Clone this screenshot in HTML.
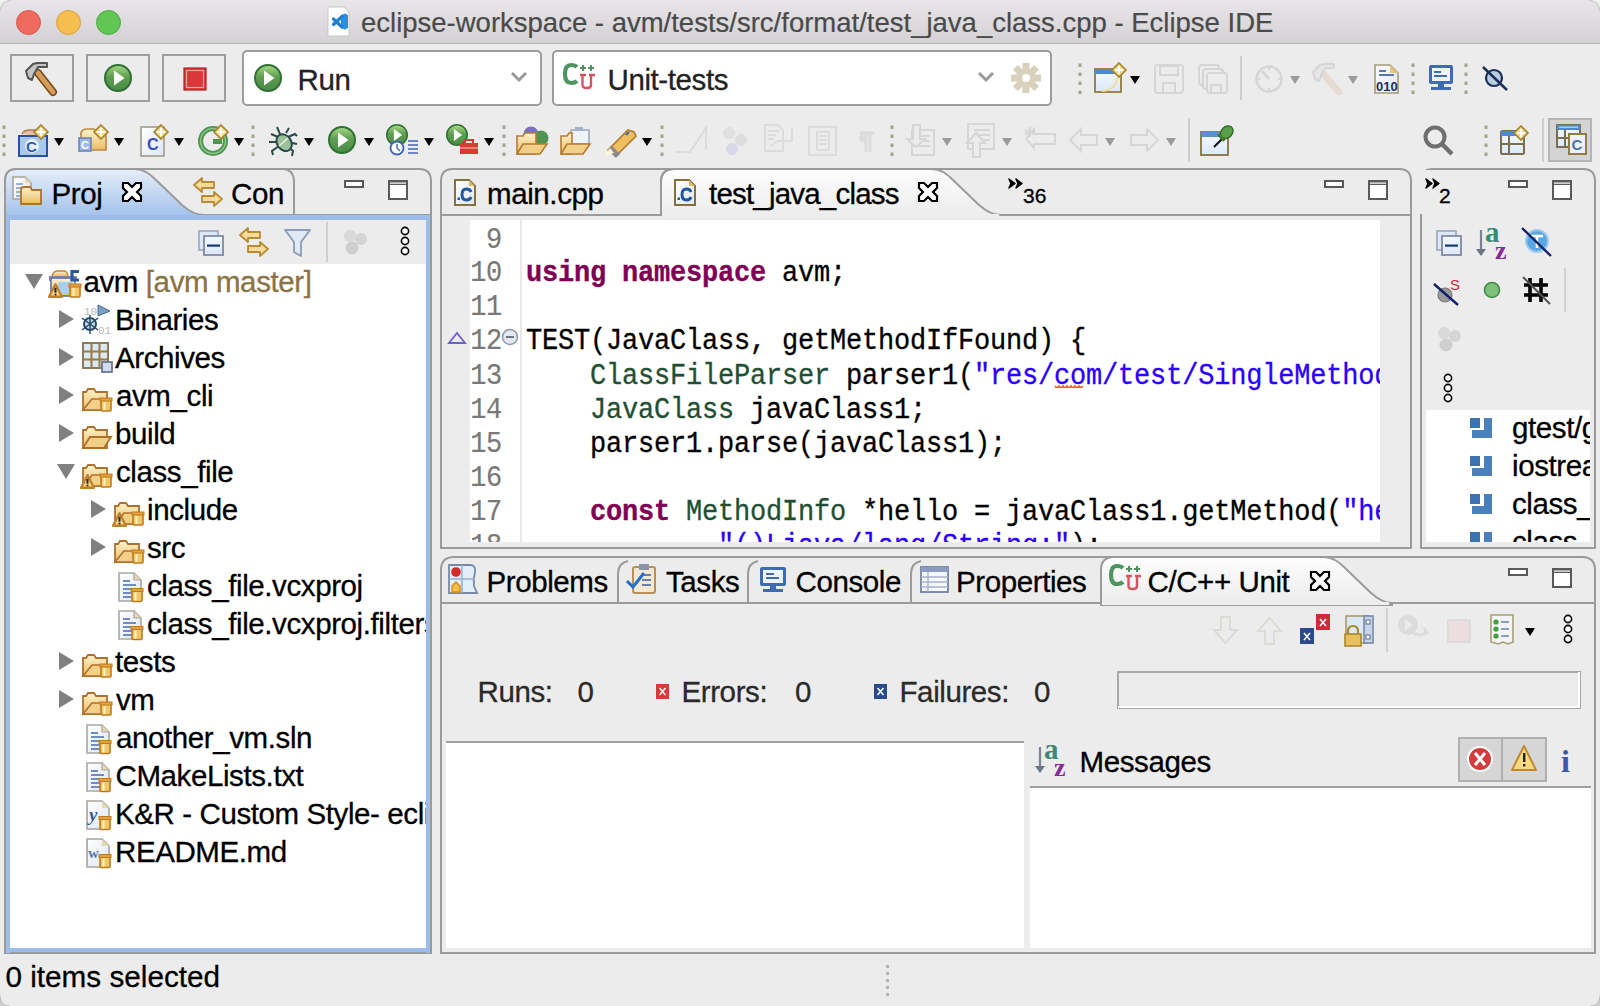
<!DOCTYPE html>
<html><head><meta charset="utf-8">
<style>
*{box-sizing:border-box;margin:0;padding:0}
html,body{width:1600px;height:1006px;overflow:hidden;background:#ececec;font-family:"Liberation Sans",sans-serif;color:#000}
.a{position:absolute}
svg{position:absolute;overflow:visible}
.t{position:absolute;font-size:29.5px;letter-spacing:-0.4px;white-space:nowrap;line-height:1;-webkit-text-stroke:0.3px}
.code{position:absolute;left:526px;font-family:"Liberation Mono",monospace;font-size:27px;letter-spacing:-0.2px;white-space:pre;line-height:32.075px;color:#000;-webkit-text-stroke:0.3px}
.kw{color:#7f0055;font-weight:bold}
.ty{color:#1f5035}
.st{color:#2a00ff}
.ln{position:absolute;left:441px;width:61px;font-family:"Liberation Mono",monospace;font-size:27px;letter-spacing:-0.3px;color:#787878;text-align:right;line-height:32.075px;white-space:pre;-webkit-text-stroke:0.2px}
.light{position:absolute;top:10px;width:25px;height:25px;border-radius:50%}
.tbtn{position:absolute;top:54px;width:64px;height:48px;border:2px solid #9e9e9e}
.combo{position:absolute;top:50px;height:56px;background:#fff;border:2px solid #9c9c9c;border-radius:5px}
.g{background:#9b9b9b;position:absolute}
.w{background:#fff;position:absolute}
.bl{background:#9cbdeb;position:absolute}
</style></head><body>
<!-- title bar -->
<div class="a" style="left:0;top:0;width:1600px;height:44px;background:linear-gradient(#e8e6e8,#d3d1d3);border-bottom:1px solid #b9b7b9;border-radius:11px 11px 0 0"></div>
<div class="light" style="left:16px;background:#ee6a5f;border:1px solid #d9564c"></div>
<div class="light" style="left:56px;background:#f6be4f;border:1px solid #dca03f"></div>
<div class="light" style="left:96px;background:#62c655;border:1px solid #50aa43"></div>
<div class="t" style="left:361px;top:8.5px;font-size:27.5px;letter-spacing:0;color:#4a4a4a;-webkit-text-stroke:0.2px">eclipse-workspace - avm/tests/src/format/test_java_class.cpp - Eclipse IDE</div>

<!-- toolbar row 1 -->
<div class="tbtn" style="left:10px"></div>
<div class="tbtn" style="left:86px"></div>
<div class="tbtn" style="left:162px"></div>
<div class="combo" style="left:242px;width:300px"></div>
<div class="t" style="left:297.5px;top:65px;color:#222">Run</div>
<div class="combo" style="left:552px;width:500px"></div>
<div class="t" style="left:607.5px;top:65px;color:#222">Unit-tests</div>

<!-- ============ LEFT PANEL ============ -->
<svg width="1600" height="1006" style="left:0;top:0">
  <defs>
    <linearGradient id="gBlue" x1="0" y1="0" x2="0" y2="1">
      <stop offset="0" stop-color="#e6eefa"/><stop offset="1" stop-color="#a3c2ec"/>
    </linearGradient>
    <linearGradient id="gWhite" x1="0" y1="0" x2="0" y2="1">
      <stop offset="0" stop-color="#fdfdfd"/><stop offset="1" stop-color="#ececec"/>
    </linearGradient>
  </defs>
  <!-- left panel outer -->
  <path d="M5,953 L5,181 Q5,169 17,169 L419,169 Q431,169 431,181 L431,953 Z" fill="#ececec" stroke="#9b9b9b" stroke-width="2"/>
  <!-- active Proj tab -->
  <path d="M5,216 L5,181 Q5,169 17,169 L134,169 C144,169 150,174 156,180 L182,205 C190,212 196,215 204,215 L204,216 Z" fill="url(#gBlue)" stroke="#9b9b9b" stroke-width="2"/>
  <!-- Con tab right edge -->
  <path d="M294,215 L294,182 Q294,169 282,169" fill="none" stroke="#9b9b9b" stroke-width="2"/>
  <line x1="204" y1="215" x2="431" y2="215" stroke="#9b9b9b" stroke-width="2"/>
  <rect x="6" y="215" width="424" height="5" fill="#9cbdeb"/>
  <rect x="6" y="215" width="4" height="738" fill="#9cbdeb"/>
  <rect x="426" y="215" width="4" height="738" fill="#9cbdeb"/>
  <rect x="6" y="948" width="424" height="4" fill="#9cbdeb"/>
  <rect x="10" y="264" width="416" height="684" fill="#fff"/>

  <!-- editor panel -->
  <path d="M441,548 L441,181 Q441,169 453,169 L1399,169 Q1411,169 1411,181 L1411,548 Z" fill="#ececec" stroke="#9b9b9b" stroke-width="2"/>
  <line x1="441" y1="215" x2="1411" y2="215" stroke="#9b9b9b" stroke-width="2"/>
  <path d="M661,217 L661,182 Q661,169 674,169 L931,169 C941,169 947,174 953,180 L979,205 C987,212 993,215 1001,215 L1001,217 Z" fill="url(#gWhite)" stroke="#9b9b9b" stroke-width="2"/>
  <path d="M661,215 L661,182 Q661,169 674,169" fill="none" stroke="#9b9b9b" stroke-width="2"/>
  <rect x="442" y="216" width="968" height="4" fill="#ececec"/>
  <rect x="662" y="214" width="337" height="3" fill="#eeeeee"/>
  <rect x="470" y="220" width="910" height="322" fill="#fff"/>
  <rect x="520" y="220" width="2" height="322" fill="#e8e8e8"/>

  <!-- outline panel -->
  <path d="M1421,548 L1421,181 Q1421,169 1433,169 L1583,169 Q1595,169 1595,181 L1595,548 Z" fill="#ececec" stroke="#9b9b9b" stroke-width="2"/>
  <rect x="1420" y="170" width="10" height="44" fill="#ececec"/>
  <rect x="1426" y="410" width="164" height="132" fill="#fff"/>

  <!-- bottom panel -->
  <path d="M441,953 L441,570 Q441,557 454,557 L1582,557 Q1595,557 1595,570 L1595,953 Z" fill="#ececec" stroke="#9b9b9b" stroke-width="2"/>
  <line x1="441" y1="603" x2="1595" y2="603" stroke="#9b9b9b" stroke-width="2"/>
  <path d="M618,603 L618,574 Q618,563 628,561" fill="none" stroke="#9b9b9b" stroke-width="2"/>
  <path d="M748,603 L748,574 Q748,563 758,561" fill="none" stroke="#9b9b9b" stroke-width="2"/>
  <path d="M911,603 L911,574 Q911,563 921,561" fill="none" stroke="#9b9b9b" stroke-width="2"/>
  <path d="M1101,605 L1101,570 Q1101,557 1114,557 L1323,557 C1333,557 1339,562 1345,568 L1371,593 C1379,600 1385,603 1392,603 L1392,605 Z" fill="url(#gWhite)" stroke="#9b9b9b" stroke-width="2"/>
  <rect x="1102" y="602" width="287" height="3" fill="#eeeeee"/>
  <!-- progress bar -->
  <rect x="1118" y="672" width="462" height="36" fill="#ececec" stroke="#a8a8a8" stroke-width="2"/>
  <line x1="1118" y1="707" x2="1580" y2="707" stroke="#fff" stroke-width="2"/>
  <line x1="1579" y1="672" x2="1579" y2="708" stroke="#fff" stroke-width="2"/>
  <!-- left tree area -->
  <rect x="446" y="742" width="578" height="206" fill="#fff"/>
  <line x1="446" y1="742" x2="1024" y2="742" stroke="#a0a0a0" stroke-width="2"/>
  <!-- messages area -->
  <rect x="1030" y="787" width="561" height="161" fill="#fff"/>
  <line x1="1030" y1="787" x2="1591" y2="787" stroke="#a0a0a0" stroke-width="2"/>
  <rect x="1459" y="738" width="87" height="43" fill="#d6d6d6" stroke="#b0b0b0" stroke-width="2"/>
  <line x1="1502" y1="738" x2="1502" y2="781" stroke="#b0b0b0" stroke-width="2"/>
</svg>

<!-- left panel text -->
<div class="t" style="left:51.5px;top:179px">Proj</div>
<div class="t" style="left:231px;top:179px">Con</div>
<div class="a" style="left:10px;top:264px;width:416px;height:684px;overflow:hidden">
<div class="t" style="left:73.5px;top:3px">avm <span style="color:#8b7443">[avm master]</span></div>
<div class="t" style="left:105.0px;top:41px">Binaries</div>
<div class="t" style="left:105.0px;top:79px">Archives</div>
<div class="t" style="left:106.0px;top:117px">avm_cli</div>
<div class="t" style="left:105.0px;top:155px">build</div>
<div class="t" style="left:106.0px;top:193px">class_file</div>
<div class="t" style="left:137.0px;top:231px">include</div>
<div class="t" style="left:137.0px;top:269px">src</div>
<div class="t" style="left:137.0px;top:307px">class_file.vcxproj</div>
<div class="t" style="left:137.0px;top:345px">class_file.vcxproj.filters</div>
<div class="t" style="left:105.0px;top:383px">tests</div>
<div class="t" style="left:106.0px;top:421px">vm</div>
<div class="t" style="left:106.0px;top:459px">another_vm.sln</div>
<div class="t" style="left:105.5px;top:497px">CMakeLists.txt</div>
<div class="t" style="left:105.0px;top:535px">K&amp;R - Custom Style- eclipse</div>
<div class="t" style="left:105.0px;top:573px">README.md</div>
</div>
<!-- editor tabs -->
<div class="t" style="left:487px;top:178.5px">main.cpp</div>
<div class="t" style="left:709px;top:178.5px;letter-spacing:-0.8px">test_java_class</div>
<div class="t" style="left:1023px;top:185px;font-size:21px;letter-spacing:0">36</div>
<!-- editor code -->
<div class="a" style="left:441px;top:220px;width:939px;height:322px;overflow:hidden"><div class="a" style="left:0;top:0;width:939px;height:400px;transform:scaleY(1.06);transform-origin:0 0">
<div class="ln" style="left:0;top:3.2px">9
10
11
12
13
14
15
16
17
18</div>
<div class="code" style="left:85px;top:3.2px">
<span class="kw">using</span> <span class="kw">namespace</span> avm;

TEST(JavaClass, getMethodIfFound) {
    <span class="ty">ClassFileParser</span> parser1(<span class="st">"res/com/test/SingleMethodClass.class"</span>);
    <span class="ty">JavaClass</span> javaClass1;
    parser1.parse(javaClass1);

    <span class="kw">const</span> <span class="ty">MethodInfo</span> *hello = javaClass1.getMethod(<span class="st">"hello"</span>,
            <span class="st">"()Ljava/lang/String;"</span>);</div>
</div></div>

<!-- outline list -->
<div class="a" style="left:1426px;top:410px;width:164px;height:132px;overflow:hidden">
<div class="t" style="left:86px;top:3px">gtest/gtest.h</div>
<div class="t" style="left:86px;top:41px">iostream</div>
<div class="t" style="left:86px;top:79px">class_file.h</div>
<div class="t" style="left:86px;top:117px">class_file.h</div>
</div>
<div class="t" style="left:1439px;top:185px;font-size:21px;letter-spacing:0">2</div>

<!-- bottom tabs -->
<div class="t" style="left:486.5px;top:566.5px">Problems</div>
<div class="t" style="left:666px;top:566.5px">Tasks</div>
<div class="t" style="left:795.5px;top:566.5px">Console</div>
<div class="t" style="left:956px;top:566.5px">Properties</div>
<div class="t" style="left:1147.5px;top:566.5px">C/C++ Unit</div>

<div class="t" style="left:477.5px;top:677px;color:#2a2a2a">Runs:</div>
<div class="t" style="left:577.5px;top:677px;color:#2a2a2a">0</div>
<div class="t" style="left:681.5px;top:677px;color:#2a2a2a">Errors:</div>
<div class="t" style="left:795px;top:677px;color:#2a2a2a">0</div>
<div class="t" style="left:899.5px;top:677px;color:#2a2a2a">Failures:</div>
<div class="t" style="left:1034px;top:677px;color:#2a2a2a">0</div>
<div class="t" style="left:1079.5px;top:747px">Messages</div>

<!-- status -->
<div class="t" style="left:5.5px;top:961.5px;font-size:29.7px;letter-spacing:0">0 items selected</div>

<!-- ============ ICONS ============ -->
<svg width="1600" height="1006" style="left:0;top:0">
<defs>
  <linearGradient id="gGreen" x1="0" y1="0" x2="0" y2="1"><stop offset="0" stop-color="#a9dc87"/><stop offset="0.45" stop-color="#5f9e52"/><stop offset="1" stop-color="#4b8a45"/></linearGradient>
  <linearGradient id="gFold" x1="0" y1="0" x2="0" y2="1"><stop offset="0" stop-color="#fff3cf"/><stop offset="1" stop-color="#e9bd62"/></linearGradient>
  <linearGradient id="gDoc" x1="0" y1="0" x2="1" y2="1"><stop offset="0" stop-color="#ffffff"/><stop offset="1" stop-color="#dde7f4"/></linearGradient>
  <linearGradient id="gWin" x1="0" y1="0" x2="0" y2="1"><stop offset="0" stop-color="#f4f9ff"/><stop offset="1" stop-color="#dbe9f8"/></linearGradient>
  <symbol id="dsep" viewBox="0 0 4 31" overflow="visible"><g fill="#a7a190"><rect x="0.5" y="0.5" width="3" height="3.5"/><rect x="0.5" y="9.5" width="3" height="3.5"/><rect x="0.5" y="18.5" width="3" height="3.5"/><rect x="0.5" y="27.5" width="3" height="3.5"/></g></symbol>
  <symbol id="dd" viewBox="0 0 10 8" overflow="visible"><path d="M0,0 H10 L5,8 Z" fill="#000"/></symbol>
  <symbol id="ddg" viewBox="0 0 10 8" overflow="visible"><path d="M0,0 H10 L5,8 Z" fill="#9a9a9a"/></symbol>
  <symbol id="play" viewBox="0 0 28 28" overflow="visible"><circle cx="14" cy="14" r="13" fill="url(#gGreen)" stroke="#2f7033" stroke-width="2"/><path d="M10,6.5 L20.5,14 L10,21.5 Z" fill="#fff"/></symbol>
  <symbol id="dplus" viewBox="0 0 14 14" overflow="visible"><path d="M7,0 L14,7 L7,14 L0,7 Z" fill="#f4d98a" stroke="#a8842e" stroke-width="1.6"/><path d="M7,3 V11 M3,7 H11" stroke="#fff" stroke-width="2"/></symbol>
  <symbol id="trir" viewBox="0 0 15 18" overflow="visible"><path d="M0,0 L15,9 L0,18 Z" fill="#808080"/></symbol>
  <symbol id="trid" viewBox="0 0 18 15" overflow="visible"><path d="M0,0 H18 L9,15 Z" fill="#808080"/></symbol>
  <symbol id="jar" viewBox="0 0 12 15" overflow="visible"><rect x="1" y="3" width="10" height="11" rx="1" fill="#f2c766" stroke="#c07a1e" stroke-width="1.6"/><rect x="0" y="1" width="12" height="3" fill="#e2a040" stroke="#c07a1e" stroke-width="1"/><rect x="3.5" y="5" width="2" height="8" fill="#fff4c8"/></symbol>
  <symbol id="warn" viewBox="0 0 14 14" overflow="visible"><path d="M7,1.2 L13,12.8 H1 Z" fill="#f6d488" stroke="#c0802a" stroke-width="2.2" stroke-linejoin="round"/><rect x="6.1" y="4.5" width="1.8" height="4.6" fill="#222"/><rect x="6.1" y="10" width="1.8" height="1.6" fill="#222"/></symbol>
  <symbol id="folder" viewBox="0 0 30 24" overflow="visible"><path d="M1,4 H4 L6,1 H12 L14,4 H25 V22 H1 Z" fill="url(#gFold)" stroke="#b0702a" stroke-width="1.8"/><path d="M1,22 L8,11 H29 L22,22 Z" fill="#f3d088" stroke="#b0702a" stroke-width="1.8"/></symbol>
  <symbol id="folderc" viewBox="0 0 30 24" overflow="visible"><path d="M1,4 H4 L6,1 H12 L14,4 H25 V22 H1 Z" fill="url(#gFold)" stroke="#b0702a" stroke-width="1.8"/><path d="M1,22 L10,11 H20 V22 Z" fill="#f3d088" stroke="#b0702a" stroke-width="1.6"/></symbol>
  <symbol id="doc" viewBox="0 0 24 30" overflow="visible"><path d="M1,1 H16 L23,8 V29 H1 Z" fill="url(#gDoc)" stroke="#a8a6a0" stroke-width="1.6"/><path d="M16,1 V8 H23" fill="#e6d9b0" stroke="#a8a6a0" stroke-width="1.2"/><path d="M5,9 H12 M5,13 H18 M5,17 H18 M5,21 H14 M5,25 H14" stroke="#6f8cc4" stroke-width="2"/></symbol>
  <symbol id="cdoc" viewBox="0 0 22 27" overflow="visible"><path d="M1,1 H15 L21,7 V26 H1 Z" fill="url(#gDoc)" stroke="#86713e" stroke-width="2"/><path d="M15,1 V7 H21 Z" fill="#d8b868"/><path d="M17,13 Q16,10 12.5,10 Q8,10 8,15.5 Q8,21 12.5,21 Q16,21 17,18" stroke="#24589a" stroke-width="3" fill="none"/><rect x="3.5" y="18.5" width="2.5" height="2.5" fill="#24589a"/></symbol>
  <symbol id="maxi" viewBox="0 0 20 20" overflow="visible"><rect x="1" y="1" width="18" height="18" fill="#fff" stroke="#5a5a5a" stroke-width="2"/><rect x="1" y="1" width="18" height="4" fill="#5a5a5a"/><rect x="2" y="2.5" width="16" height="1.2" fill="#fff"/></symbol>
  <symbol id="mini" viewBox="0 0 20 8" overflow="visible"><rect x="1" y="1" width="18" height="6" fill="#fff" stroke="#5a5a5a" stroke-width="2"/></symbol>
  <symbol id="closex" viewBox="0 0 20 20" overflow="visible"><path d="M1,1 H6 L10,5 L14,1 H19 V6 L15,10 L19,14 V19 H14 L10,15 L6,19 H1 V14 L5,10 L1,6 Z" fill="#fff" stroke="#000" stroke-width="2.2" stroke-linejoin="miter"/></symbol>
  <symbol id="dots3" viewBox="0 0 10 30" overflow="visible"><circle cx="5" cy="4" r="3.6" fill="#fff" stroke="#000" stroke-width="1.6"/><circle cx="5" cy="14" r="3.6" fill="#fff" stroke="#000" stroke-width="1.6"/><circle cx="5" cy="24" r="3.6" fill="#fff" stroke="#000" stroke-width="1.6"/></symbol>
  <symbol id="blobs" viewBox="0 0 26 26" overflow="visible"><circle cx="8" cy="7" r="6" fill="#d8d8d8"/><circle cx="19" cy="10" r="6" fill="#d4d4d4"/><circle cx="10" cy="19" r="6.5" fill="#cfcfcf"/></symbol>
  <symbol id="collapse" viewBox="0 0 26 26" overflow="visible"><rect x="1" y="1" width="19" height="19" fill="#dce8f5" stroke="#9aa6c0" stroke-width="1.6"/><rect x="6" y="6" width="19" height="19" fill="url(#gWin)" stroke="#7f8aa6" stroke-width="1.8"/><rect x="9" y="14.5" width="13" height="2.2" fill="#123a78"/></symbol>
  <symbol id="link" viewBox="0 0 32 30" overflow="visible"><path d="M1,8 L9,1 V5 H21 V11 H9 V15 Z" fill="#f6dc9a" stroke="#b98a34" stroke-width="1.8" stroke-linejoin="round"/><path d="M31,22 L23,29 V25 H11 V19 H23 V15 Z" fill="#f6dc9a" stroke="#b98a34" stroke-width="1.8" stroke-linejoin="round"/></symbol>
  <symbol id="sortaz" viewBox="0 0 32 32" overflow="visible"><path d="M4,2 V27" stroke="#7a8494" stroke-width="2.2" fill="none"/><path d="M-1,21 L4,28 L9,21 Z" fill="#6a7484"/><text x="8" y="14" font-family="Liberation Serif" font-weight="bold" font-size="29" fill="#3b8a76">a</text><text x="18" y="31" font-family="Liberation Serif" font-weight="bold" font-size="26" fill="#8a2a98">z</text></symbol>
  <symbol id="arrows" viewBox="0 0 30 30" overflow="visible"><path d="M1,8 L9,1 V5 H21 V11 H9 V15 Z" fill="#f6dc9a" stroke="#b98a34" stroke-width="1.8" stroke-linejoin="round"/><path d="M29,22 L21,29 V25 H9 V19 H21 V15 Z" fill="#f6dc9a" stroke="#b98a34" stroke-width="1.8" stroke-linejoin="round"/></symbol>
</defs>

<!-- title doc icon -->
<path d="M328,7 H344 L349,12 V36 H328 Z" fill="#fff" stroke="#c8c8c8" stroke-width="1"/>
<path d="M341,15 L345,13.5 L348,15 V28 L345,29.5 L341,28 Z" fill="#2b8fe0"/>
<path d="M342,16.5 L333.5,24.5 M342,27 L333.5,19" stroke="#1f7fd0" stroke-width="3.2" fill="none" stroke-linecap="round"/>

<!-- toolbar row1 icons -->
<!-- hammer -->
<g transform="translate(25,62)">
  <path d="M13,11 L28,30" stroke="#7a4716" stroke-width="8" stroke-linecap="round"/>
  <path d="M13,11 L28,30" stroke="#d49d5e" stroke-width="5" stroke-linecap="round"/>
  <path d="M1,9 L8,2 L12,1 H22 V5 H13 L12,7 L9,12 L7,18 L3,16 Z" fill="#c4c4c4" stroke="#555" stroke-width="2" stroke-linejoin="round"/>
</g>
<use href="#play" x="104" y="64" width="28" height="28"/>
<rect x="184" y="68" width="22" height="22" fill="#d9383a" stroke="#a82424" stroke-width="1.2"/>
<rect x="186.5" y="70.5" width="17" height="17" fill="none" stroke="#f0a0a0" stroke-width="1.2"/>
<use href="#play" x="254" y="64" width="28" height="28"/>
<path d="M512,73 L519,80 L526,73" stroke="#999" stroke-width="3" fill="none"/>
<path d="M979,73 L986,80 L993,73" stroke="#999" stroke-width="3" fill="none"/>
<!-- C++U -->
<path d="M577,67 Q575,65 571,65 Q565,65 565,74 Q565,83 571,83 Q575,83 577,81" stroke="#4e9460" stroke-width="4.2" fill="none"/>
<path d="M580,68 H586 M583,65 V71 M588,68 H594 M591,65 V71" stroke="#4e9460" stroke-width="2"/>
<path d="M580,75 H586 M582.5,75 V85 Q582.5,88 587,88 Q591,88 591,85 V75 M589,75 H595" stroke="#d65462" stroke-width="2.4" fill="none"/>
<!-- gear -->
<g transform="translate(1026,78)" fill="#d8d2bc">
  <circle r="9.5"/>
  <rect x="-3.5" y="-15" width="7" height="30"/><rect x="-15" y="-3.5" width="30" height="7"/>
  <rect x="-3.5" y="-15" width="7" height="30" transform="rotate(45)"/><rect x="-3.5" y="-15" width="7" height="30" transform="rotate(-45)"/>
  <circle r="4" fill="#fff"/>
</g>
<use href="#dsep" x="1078" y="63" width="4" height="31"/>
<g transform="translate(1094,68)">
  <rect x="1" y="1" width="26" height="23" fill="url(#gWin)" stroke="#9b8650" stroke-width="2"/>
  <rect x="1" y="1" width="22" height="5" fill="#4f8ad0"/>
  <path d="M8,23 Q22,22 23,10" stroke="#f2dd9a" stroke-width="2" fill="none"/>
</g>
<use href="#dplus" x="1112" y="63" width="14" height="14"/>
<use href="#dd" x="1130" y="76" width="10" height="8"/>
<!-- disabled saves -->
<g stroke="#d6d6d6" stroke-width="2" fill="none">
  <rect x="1155" y="65" width="28" height="28" rx="3"/><rect x="1160" y="66" width="18" height="9"/><rect x="1163" y="83" width="12" height="10"/>
  <rect x="1199" y="65" width="20" height="20" rx="3"/><rect x="1203" y="69" width="20" height="20" rx="3" fill="#ececec"/><rect x="1207" y="73" width="20" height="20" rx="3" fill="#ececec"/><rect x="1211" y="85" width="10" height="8"/>
</g>
<rect x="1240" y="56" width="2" height="44" fill="#cdcdcd"/>
<g transform="translate(1269,79)"><circle r="12.5" fill="none" stroke="#d6d6d6" stroke-width="2.5"/><path d="M0,0 L-7,-8" stroke="#d6d6d6" stroke-width="3"/><path d="M0,-12 V-9 M0,12 V9 M-12,0 H-9 M12,0 H9" stroke="#d6d6d6" stroke-width="2"/></g>
<use href="#ddg" x="1290" y="76" width="10" height="8"/>
<g transform="translate(1312,63)">
  <path d="M12,12 L27,29" stroke="#e4dcd2" stroke-width="7" stroke-linecap="round"/>
  <path d="M1,9 L8,2 L12,1 H22 V5 H13 L12,7 L9,12 L7,18 L3,16 Z" fill="#e6e6e6" stroke="#d6d6d6" stroke-width="2" stroke-linejoin="round"/>
</g>
<use href="#ddg" x="1348" y="76" width="10" height="8"/>
<g transform="translate(1374,64)">
  <path d="M1,1 H16 L24,9 V29 H1 Z" fill="url(#gDoc)" stroke="#a49a7a" stroke-width="1.6"/><path d="M16,1 V9 H24" fill="#e4c87a"/>
  <path d="M5,7 H12 M5,11 H20" stroke="#5a78b0" stroke-width="2"/>
  <text x="2" y="27" font-family="Liberation Sans" font-weight="bold" font-size="13" fill="#1e2e5c">010</text>
</g>
<use href="#dsep" x="1411" y="63" width="4" height="31"/>
<g transform="translate(1428,64)">
  <rect x="1" y="1" width="24" height="19" rx="2" fill="#3f6ab4"/><rect x="4" y="4" width="18" height="13" fill="#eef4fc"/>
  <path d="M6,8 H13 M6,12 H19" stroke="#3f6ab4" stroke-width="2"/>
  <rect x="10" y="20" width="6" height="3" fill="#3f6ab4"/><rect x="3" y="23" width="20" height="3" fill="#3f6ab4"/>
</g>
<use href="#dsep" x="1464" y="63" width="4" height="31"/>
<g transform="translate(1482,66)"><circle cx="12" cy="12" r="8" fill="#b9cfe0" stroke="#1a2e5a" stroke-width="2.2"/><path d="M1,1 L25,24" stroke="#1a2e5a" stroke-width="2.5"/></g>

<!-- toolbar row 2 -->
<use href="#dsep" x="2" y="125" width="4" height="31"/>
<g transform="translate(18,130)">
  <path d="M4,4 Q6,0 12,0 H20 V6" fill="#e8c0a0" stroke="#b07850" stroke-width="1.5"/>
  <rect x="1" y="6" width="28" height="20" fill="#a9c8ee" stroke="#2a4fa8" stroke-width="2"/>
  <circle cx="14" cy="16" r="7" fill="#e8f0fa"/>
  <text x="8" y="22" font-family="Liberation Sans" font-weight="bold" font-size="15" fill="#2e5ea8">C</text>
</g>
<use href="#dplus" x="34" y="125" width="14" height="14"/>
<use href="#dd" x="54" y="138" width="10" height="8"/>
<g transform="translate(78,128)">
  <path d="M3,5 Q4,1 9,1 H16 L18,5 H28 V22 H3 Z" fill="url(#gFold)" stroke="#c08640" stroke-width="1.6"/>
  <rect x="1" y="10" width="12" height="13" fill="#9bb8e6" stroke="#6a86b8" stroke-width="1.6"/>
  <text x="3" y="21" font-family="Liberation Sans" font-weight="bold" font-size="11" fill="#fff">C</text>
</g>
<use href="#dplus" x="94" y="125" width="14" height="14"/>
<use href="#dd" x="114" y="138" width="10" height="8"/>
<g transform="translate(140,126)">
  <rect x="1" y="1" width="23" height="29" fill="url(#gDoc)" stroke="#a8a496" stroke-width="1.8"/>
  <text x="7" y="24" font-family="Liberation Sans" font-weight="bold" font-size="16" fill="#3a4fc0">C</text>
</g>
<use href="#dplus" x="154" y="125" width="14" height="14"/>
<use href="#dd" x="174" y="138" width="10" height="8"/>
<g transform="translate(213,141)"><circle r="12.5" fill="none" stroke="#4d9650" stroke-width="5"/><circle r="12.5" fill="none" stroke="#8cc48a" stroke-width="1.4"/><rect x="0" y="-2" width="9" height="5" fill="#4d9650"/></g>
<use href="#dplus" x="214" y="125" width="14" height="14"/>
<use href="#dd" x="234" y="138" width="10" height="8"/>
<use href="#dsep" x="251" y="125" width="4" height="31"/>
<!-- bug -->
<g transform="translate(283,141)" stroke="#2a4a4a" stroke-width="2" fill="none">
  <path d="M-5,-4 L-12,-7 M-4,1 L-14,1 M-4,5 L-11,10 L-10,14 M5,-4 L12,-7 L14,-5 M4,1 L14,3 M4,5 L10,10 L9,15 M-3,-7 L-6,-14 M3,-8 L6,-13"/>
  <ellipse cx="0" cy="2" rx="7" ry="9" fill="#9cc09a" transform="rotate(-35)"/>
  <path d="M-4,5 L5,-3" stroke="#e8f4e0" stroke-width="1.5"/>
</g>
<use href="#dd" x="304" y="138" width="10" height="8"/>
<use href="#play" x="328" y="126" width="28" height="28"/>
<use href="#dd" x="364" y="138" width="10" height="8"/>
<use href="#play" x="386" y="124" width="22" height="22"/>
<circle cx="397" cy="148" r="6.5" fill="#fff" stroke="#3c64b4" stroke-width="1.8"/><path d="M397,144 V148 L400,151" stroke="#3c64b4" stroke-width="1.4" fill="none"/>
<path d="M408,141 H418 M408,145 H418 M408,149 H418 M408,153 H418" stroke="#6a86c6" stroke-width="2"/>
<use href="#dd" x="424" y="138" width="10" height="8"/>
<use href="#play" x="446" y="124" width="22" height="22"/>
<rect x="460" y="143" width="18" height="11" fill="#d83a32"/><path d="M465,143 V140 H473 V143" stroke="#d83a32" stroke-width="2" fill="none"/><path d="M460,148 H478" stroke="#f4b0a0" stroke-width="1.2"/>
<use href="#dd" x="484" y="138" width="10" height="8"/>
<use href="#dsep" x="502" y="125" width="4" height="31"/>
<!-- open folder spheres -->
<g transform="translate(516,126)">
  <circle cx="15" cy="8" r="7.5" fill="#7a72c0"/><circle cx="25" cy="12" r="7.5" fill="#4e9452"/>
  <path d="M1,10 H7 L9,7 H20 V28 H1 Z" fill="url(#gFold)" stroke="#b87a30" stroke-width="1.6"/>
  <path d="M1,28 L7,18 H31 L24,28 Z" fill="#f3d088" stroke="#b87a30" stroke-width="1.6"/>
</g>
<g transform="translate(560,127)">
  <rect x="11" y="3" width="18" height="14" fill="#eef2fa" stroke="#a0a8b8" stroke-width="1.6"/><rect x="15" y="0" width="8" height="4" fill="#a6b2c8"/>
  <path d="M1,9 H7 L9,6 H12 V27 H1 Z" fill="url(#gFold)" stroke="#b87a30" stroke-width="1.6"/>
  <path d="M1,27 L7,17 H30 L23,27 Z" fill="#f3d088" stroke="#b87a30" stroke-width="1.6"/>
</g>
<g transform="translate(604,126)">
  <path d="M4,24 L24,4 L30,6 L32,10 L12,30 Z" fill="#f0c060" stroke="#b07a2a" stroke-width="1.6"/>
  <path d="M6,22 L14,30" stroke="#8a8a8a" stroke-width="6"/>
  <path d="M0,30 L6,22 L10,27 Z" fill="#fff6d8"/>
  <path d="M22,9 L25,6" stroke="#3060b0" stroke-width="2"/>
</g>
<use href="#dd" x="642" y="138" width="10" height="8"/>
<use href="#dsep" x="660" y="125" width="4" height="31"/>
<g fill="none" stroke="#dcdcdc" stroke-width="2">
  <path d="M676,152 H690 L706,128 V150"/>
  <circle cx="729" cy="133" r="6" fill="#e0e0e0" stroke="none"/><circle cx="741" cy="140" r="6" fill="#dddddd" stroke="none"/><circle cx="732" cy="149" r="6" fill="#d8d8e8" stroke="none"/>
  <path d="M765,125 H778 L783,130 V151 H765 Z M768,131 H779 M768,135 H776 M768,139 H774 M770,146 L778,141 H792 V127"/>
  <rect x="809" y="127" width="27" height="28"/><rect x="817" y="132" width="12" height="18"/><path d="M819,136 H827 M819,140 H827 M819,144 H827"/>
  <path d="M860,133 H874 M866,133 V152 M870,133 V152" stroke-width="3"/><circle cx="863" cy="138" r="4" fill="#dcdcdc" stroke="none"/>
</g>
<use href="#dsep" x="890" y="125" width="4" height="31"/>
<g fill="none" stroke="#d6d6d6" stroke-width="2">
  <rect x="912" y="130" width="22" height="25"/><path d="M912,146 H930 M916,136 H930 M916,141 H930"/>
  <path d="M913,125 H920 V139 H925 L916,147 L907,139 H913 Z" fill="#ececec"/>
  <rect x="968" y="124" width="26" height="25"/><path d="M974,130 H990 M974,135 H990 M974,140 H990"/>
  <path d="M973,157 H980 V143 H985 L976,133 L967,143 H973 Z" fill="#ececec"/>
  <path d="M1034,129 L1026,139 L1034,148 V144 H1055 V134 H1034 Z"/><path d="M1030,127 V137 M1025,130 L1035,134 M1025,134 L1035,130"/>
  <path d="M1081,129 L1070,140 L1081,151 V145 H1097 V135 H1081 Z"/>
  <path d="M1147,129 L1158,140 L1147,151 V145 H1131 V135 H1147 Z"/>
</g>
<use href="#ddg" x="942" y="138" width="10" height="8"/>
<use href="#ddg" x="1002" y="138" width="10" height="8"/>
<use href="#ddg" x="1105" y="138" width="10" height="8"/>
<use href="#ddg" x="1166" y="138" width="10" height="8"/>
<rect x="1188" y="118" width="2" height="44" fill="#cdcdcd"/>
<g transform="translate(1200,131)">
  <rect x="1" y="1" width="27" height="23" fill="url(#gWin)" stroke="#8e7e50" stroke-width="2"/><rect x="1" y="1" width="22" height="5" fill="#5b8fd0"/>
  
</g>
<path d="M1222,139 L1214,147" stroke="#111" stroke-width="2.2"/><g transform="translate(1226,133) rotate(45)"><ellipse cx="0" cy="-1" rx="5.5" ry="7" fill="#5aa048" stroke="#2e6a28" stroke-width="1.4"/><rect x="-4.5" y="5" width="9" height="3" fill="#3e7a30"/></g>
<!-- magnifier -->
<circle cx="1435" cy="137" r="9.5" fill="none" stroke="#6f6f6f" stroke-width="4"/><path d="M1442,144 L1452,154" stroke="#6f6f6f" stroke-width="4.5"/>
<use href="#dsep" x="1484" y="125" width="4" height="31"/>
<g transform="translate(1500,130)">
  <rect x="1" y="1" width="23" height="23" rx="1.5" fill="url(#gWin)" stroke="#7a6e50" stroke-width="2"/><rect x="1" y="1" width="23" height="5" fill="#4f8ad0"/>
  <path d="M9,6 V24 M1,14 H24" stroke="#7a6e50" stroke-width="2"/>
</g>
<use href="#dplus" x="1514" y="126" width="14" height="14"/>
<rect x="1542" y="118" width="2" height="44" fill="#cdcdcd"/>
<rect x="1549" y="119" width="42" height="42" fill="#d4d4d4" stroke="#b4b4b4" stroke-width="2"/>
<g transform="translate(1556,124)">
  <rect x="1" y="1" width="23" height="22" fill="url(#gWin)" stroke="#7a6e50" stroke-width="2"/><rect x="1" y="1" width="23" height="5" fill="#4f8ad0"/><rect x="3" y="2.5" width="19" height="1.5" fill="#a8c8f0"/>
  <path d="M9,6 V23 M1,14 H24" stroke="#7a6e50" stroke-width="2"/>
  <rect x="13" y="10" width="17" height="20" fill="#eef2f8" stroke="#8e7e46" stroke-width="2"/>
  <text x="15.5" y="26" font-family="Liberation Sans" font-weight="bold" font-size="15" fill="#4a72b0">C</text>
</g>
</svg>


<!-- ============ ICONS 2 ============ -->
<svg width="1600" height="1006" style="left:0;top:0">
<!-- Left panel tab icons -->
<g transform="translate(12,176)">
  <path d="M1,1 H13 L19,7 V23 H1 Z" fill="url(#gDoc)" stroke="#a8a496" stroke-width="1.6"/><path d="M13,1 V7 H19" fill="#e6d9b0"/>
  <path d="M4,8 H11 M4,12 H11 M4,16 H9 M4,20 H9" stroke="#7e9ccc" stroke-width="1.6"/>
  <path d="M9,14 Q9,11 12,11 H18 L20,14 H29 V28 H9 Z" fill="url(#gFold)" stroke="#b0722a" stroke-width="1.8"/>
</g>
<use href="#closex" x="122" y="182" width="20" height="20"/>
<use href="#arrows" x="193" y="177" width="30" height="30"/>
<use href="#mini" x="344" y="180" width="20" height="8"/>
<use href="#maxi" x="388" y="180" width="20" height="20"/>
<!-- left toolbar -->
<use href="#collapse" x="198" y="230" width="26" height="26"/>
<use href="#arrows" x="239" y="227" width="30" height="30"/>
<path d="M285,230 H310 L301,242 V256 L294,252 V242 Z" fill="#dfeaf6" stroke="#8a9cb8" stroke-width="1.8" stroke-linejoin="round"/>
<rect x="326" y="222" width="2" height="40" fill="#d0d0d0"/>
<use href="#blobs" x="342" y="229" width="26" height="26"/>
<use href="#dots3" x="400" y="227" width="10" height="30"/>

<!-- tree -->
<use href="#trid" x="25" y="274" width="18" height="15"/>
<g transform="translate(48,270)">
  <path d="M4,6 Q5,1 10,1 H16 Q19,1 20,6" fill="url(#gFold)" stroke="#c08640" stroke-width="1.5"/>
  <rect x="1" y="6" width="28" height="5" fill="#8a86a8"/>
  <rect x="3" y="8" width="24" height="18" fill="url(#gFold)" stroke="#6070b0" stroke-width="1.6"/>
  <rect x="10" y="12" width="14" height="12" fill="#a8d0f4"/>
  <path d="M31,1.5 H24 V10 H31" stroke="#2a5a9a" stroke-width="3.2" fill="none"/>
</g>
<use href="#warn" x="48" y="283" width="15" height="15"/>
<use href="#jar" x="69" y="283" width="12" height="15"/>

<use href="#trir" x="59" y="310" width="15" height="18"/>
<g transform="translate(80,304)">
  <text x="4" y="11" font-family="Liberation Mono" font-size="11" fill="#b8b8b8">10</text>
  <path d="M18,1 V12 L30,7 Z" fill="#7aa0c8" stroke="#4a6a90" stroke-width="1"/>
  <circle cx="10" cy="20" r="6" fill="#c8dce0" stroke="#2a4a6a" stroke-width="2"/>
  <path d="M2,14 L18,26 M2,26 L18,14 M10,11 V30" stroke="#2a4a6a" stroke-width="1.5"/>
  <text x="18" y="30" font-family="Liberation Mono" font-size="11" fill="#b8b8b8">01</text>
</g>
<use href="#trir" x="59" y="348" width="15" height="18"/>
<g transform="translate(82,342)">
  <rect x="1" y="1" width="25" height="25" fill="#dde8f6" stroke="#8a7a58" stroke-width="2"/>
  <path d="M9.5,1 V26 M17.5,1 V26 M1,9.5 H26 M1,17.5 H26" stroke="#9a7a40" stroke-width="2"/>
  <rect x="20" y="20" width="10" height="10" fill="#cfdcf0" stroke="#6a7890" stroke-width="1.8"/>
</g>
<use href="#trir" x="59" y="386" width="15" height="18"/>
<use href="#folderc" x="82" y="388" width="30" height="24"/><use href="#jar" x="100" y="397" width="12" height="15"/>
<use href="#trir" x="59" y="424" width="15" height="18"/>
<use href="#folder" x="82" y="426" width="30" height="24"/>
<use href="#trid" x="57" y="464" width="18" height="15"/>
<use href="#folderc" x="82" y="464" width="30" height="24"/><use href="#warn" x="80" y="474" width="15" height="15"/><use href="#jar" x="100" y="473" width="12" height="15"/>
<use href="#trir" x="91" y="500" width="15" height="18"/>
<use href="#folderc" x="114" y="502" width="30" height="24"/><use href="#warn" x="112" y="512" width="15" height="15"/><use href="#jar" x="132" y="511" width="12" height="15"/>
<use href="#trir" x="91" y="538" width="15" height="18"/>
<use href="#folderc" x="114" y="540" width="30" height="24"/><use href="#jar" x="132" y="549" width="12" height="15"/>
<use href="#doc" x="118" y="572" width="24" height="30"/><use href="#jar" x="131" y="587" width="12" height="16"/>
<use href="#doc" x="118" y="610" width="24" height="30"/><use href="#jar" x="131" y="625" width="12" height="16"/>
<use href="#trir" x="59" y="652" width="15" height="18"/>
<use href="#folderc" x="82" y="654" width="30" height="24"/><use href="#jar" x="100" y="663" width="12" height="15"/>
<use href="#trir" x="59" y="690" width="15" height="18"/>
<use href="#folderc" x="82" y="692" width="30" height="24"/><use href="#jar" x="100" y="701" width="12" height="15"/>
<use href="#doc" x="86" y="724" width="24" height="30"/><use href="#jar" x="99" y="739" width="12" height="16"/>
<use href="#doc" x="86" y="762" width="24" height="30"/><use href="#jar" x="99" y="777" width="12" height="16"/>
<g transform="translate(86,800)"><path d="M1,1 H16 L23,8 V29 H1 Z" fill="url(#gDoc)" stroke="#a8a496" stroke-width="1.6"/><path d="M16,1 V8 H23" fill="#e6d9b0"/><text x="3" y="21" font-family="Liberation Serif" font-style="italic" font-weight="bold" font-size="19" fill="#3a5a9a">y</text></g><use href="#jar" x="99" y="815" width="12" height="16"/>
<g transform="translate(86,838)"><path d="M1,1 H16 L23,8 V29 H1 Z" fill="url(#gDoc)" stroke="#a8a496" stroke-width="1.6"/><path d="M16,1 V8 H23" fill="#e6d9b0"/><text x="2" y="20" font-family="Liberation Serif" font-weight="bold" font-size="15" fill="#5a78b0">w</text></g><use href="#jar" x="99" y="853" width="12" height="16"/>

<!-- editor tabs -->
<use href="#cdoc" x="454" y="179" width="22" height="27"/>
<use href="#cdoc" x="674" y="179" width="22" height="27"/>
<use href="#closex" x="918" y="182" width="20" height="20"/>
<path d="M1009,179 L1015,183.5 L1009,188 L1011,183.5 Z M1016,179 L1022,183.5 L1016,188 L1018,183.5 Z" fill="#000" stroke="#000" stroke-width="1.5" stroke-linejoin="round"/>
<use href="#mini" x="1324" y="180" width="20" height="8"/>
<use href="#maxi" x="1368" y="180" width="20" height="20"/>
<!-- fold marker -->
<path d="M449,343 L457,333 L465,343 Z" fill="none" stroke="#6b62c8" stroke-width="1.8"/>
<circle cx="510" cy="337" r="7.5" fill="#e4e8ee" stroke="#8a98aa" stroke-width="1.5"/><path d="M506,337 H514" stroke="#4a5a6a" stroke-width="1.6"/>
<path d="M1055,386 q2,3 4,0 q2,3 4,0 q2,3 4,0 q2,3 4,0 q2,3 4,0 q2,3 4,0 q2,3 4,0" stroke="#e4683a" stroke-width="1.6" fill="none"/>

<!-- outline panel -->
<path d="M1426,179 L1432,183.5 L1426,188 L1428,183.5 Z M1433,179 L1439,183.5 L1433,188 L1435,183.5 Z" fill="#000" stroke="#000" stroke-width="1.5" stroke-linejoin="round"/>
<use href="#mini" x="1508" y="180" width="20" height="8"/>
<use href="#maxi" x="1552" y="180" width="20" height="20"/>
<use href="#collapse" x="1436" y="230" width="26" height="26"/>
<use href="#sortaz" x="1477" y="228" width="32" height="32"/>
<circle cx="1537" cy="241" r="11" fill="#5aa6e0" stroke="#9ccaee" stroke-width="2"/><path d="M1531,236 H1543 M1537,236 V248" stroke="#fff" stroke-width="2.5"/><path d="M1522,228 L1551,256" stroke="#10206a" stroke-width="2.4"/>
<circle cx="1445" cy="295" r="7" fill="#9a9a9a" stroke="#7a7a7a" stroke-width="1.2"/><text x="1450" y="290" font-family="Liberation Sans" font-size="15" fill="#d02a3a">S</text><path d="M1434,284 L1458,305" stroke="#10206a" stroke-width="2.4"/>
<circle cx="1492" cy="290" r="7.5" fill="#7cc07a" stroke="#3e8c46" stroke-width="1.6"/>
<path d="M1530,278 V302 M1541,278 V302 M1524,285 H1548 M1524,295 H1548" stroke="#000" stroke-width="3.6"/><path d="M1523,277 L1550,304" stroke="#555" stroke-width="2"/>
<rect x="1564" y="268" width="2" height="44" fill="#d0d0d0"/>
<use href="#blobs" x="1436" y="326" width="26" height="26"/>
<use href="#dots3" x="1443" y="374" width="10" height="30"/>
<g fill="#4a80bc"><rect x="1470" y="418" width="10" height="10" fill="#3d72b0"/><path d="M1484,418 H1492 V438 H1472 V430 H1484 Z"/></g>
<g fill="#4a80bc"><rect x="1470" y="456" width="10" height="10" fill="#3d72b0"/><path d="M1484,456 H1492 V476 H1472 V468 H1484 Z"/></g>
<g fill="#4a80bc"><rect x="1470" y="494" width="10" height="10" fill="#3d72b0"/><path d="M1484,494 H1492 V514 H1472 V506 H1484 Z"/></g>
<g fill="#4a80bc"><rect x="1470" y="532" width="10" height="10" fill="#3d72b0"/><rect x="1484" y="532" width="8" height="10"/></g>
<!-- bottom tabs icons -->
<g transform="translate(448,564)">
  <path d="M1,1 H22 Q28,1 27,8 Q25,15 26,22 L29,29 H1 Z" fill="#e2eef8" stroke="#7888a8" stroke-width="1.8"/>
  <path d="M14,1 V29 M1,15 H27" stroke="#9ab0d0" stroke-width="1.6"/>
  <circle cx="8" cy="8" r="4.8" fill="#d42a2a"/>
  <path d="M4,28 V22 L8,18 L12,22 V28 Z" fill="#f4c040" stroke="#e08a20" stroke-width="1.5"/>
</g>
<g transform="translate(626,563)">
  <rect x="7" y="4" width="22" height="26" rx="2" fill="#f2e8d4" stroke="#b89058" stroke-width="2"/>
  <rect x="13" y="1" width="10" height="6" fill="#8a92a8"/>
  <path d="M16,12 H25 M16,17 H25 M16,22 H25" stroke="#6880b0" stroke-width="1.8"/>
  <path d="M1,18 L7,24 L18,10" stroke="#2070d0" stroke-width="3" fill="none"/>
</g>
<g transform="translate(759,566)">
  <rect x="1" y="1" width="26" height="19" rx="2" fill="#3f6ab4"/><rect x="4" y="4" width="20" height="13" fill="#eef4fc"/>
  <path d="M7,8 H15 M7,12 H20" stroke="#3f6ab4" stroke-width="2"/>
  <rect x="11" y="20" width="6" height="3" fill="#3f6ab4"/><rect x="4" y="23" width="20" height="3" fill="#3f6ab4"/>
</g>
<g transform="translate(920,566)">
  <rect x="1" y="1" width="27" height="25" fill="#f4f7fb" stroke="#7480a0" stroke-width="1.8"/>
  <rect x="1" y="1" width="27" height="5" fill="#8a9ac0"/>
  <path d="M1,11 H28 M1,16 H28 M1,21 H28 M8,6 V26" stroke="#a8b4cc" stroke-width="1.4"/>
</g>
<g transform="translate(1110,566)">
  <path d="M13,2 Q11,0 7,0 Q1,0 1,9 Q1,18 7,18 Q11,18 13,16" stroke="#4e9460" stroke-width="4.2" fill="none"/>
  <path d="M16,3 H22 M19,0 V6 M24,3 H30 M27,0 V6" stroke="#4e9460" stroke-width="2"/>
  <path d="M16,10 H22 M18.5,10 V20 Q18.5,23 23,23 Q27,23 27,20 V10 M25,10 H31" stroke="#d65462" stroke-width="2.4" fill="none"/>
</g>
<use href="#closex" x="1310" y="571" width="20" height="20"/>
<use href="#mini" x="1508" y="568" width="20" height="8"/>
<use href="#maxi" x="1552" y="568" width="20" height="20"/>

<!-- bottom toolbar -->
<g fill="#ececec" stroke="#dcdcd6" stroke-width="2">
  <path d="M1221,617 H1230 V630 H1237 L1225.5,643 L1214,630 H1221 Z"/>
  <path d="M1265,644 H1274 V631 H1281 L1269.5,618 L1258,631 H1265 Z"/>
</g>
<rect x="1300" y="628" width="14" height="16" fill="#2a4a8c"/><path d="M1304,633 L1310,640 M1310,633 L1304,640" stroke="#fff" stroke-width="1.6"/>
<rect x="1316" y="614" width="14" height="16" fill="#d02a3a"/><path d="M1320,619 L1326,626 M1326,619 L1320,626" stroke="#fff" stroke-width="1.6"/>
<g transform="translate(1344,615)">
  <rect x="2" y="1" width="22" height="27" fill="#dbe8f6" stroke="#a89a6a" stroke-width="1.6"/>
  <rect x="20" y="1" width="9" height="27" fill="#c8d4e8" stroke="#7a8aaa" stroke-width="1.6"/>
  <rect x="22" y="5" width="4" height="4" fill="#fff" stroke="#5a6a8a" stroke-width="1"/><rect x="22" y="20" width="4" height="4" fill="#fff" stroke="#5a6a8a" stroke-width="1"/>
  <path d="M4,20 V16 Q4,11 9,11 Q14,11 14,16 V20" stroke="#a88a30" stroke-width="2.2" fill="none"/>
  <rect x="1" y="19" width="16" height="12" fill="#e8c060" stroke="#a88a30" stroke-width="1.6"/>
</g>
<rect x="1386" y="608" width="2" height="44" fill="#d0d0d0"/>
<g transform="translate(1398,614)" fill="#dcdcdc"><circle cx="10" cy="11" r="10"/><path d="M7,5 L15,11 L7,17 Z" fill="#eaeaea"/><path d="M14,18 Q22,24 28,18 M26,14 L29,19 L24,21" stroke="#dcdcdc" stroke-width="3" fill="none"/></g>
<rect x="1448" y="620" width="22" height="22" fill="#ecdede" stroke="#dcdcdc" stroke-width="2"/>
<g transform="translate(1490,614)">
  <path d="M1,1 H23 V28 L18,30 L13,28 L8,30 L1,28 Z" fill="#f2f4f8" stroke="#a8a070" stroke-width="1.6"/>
  <circle cx="6" cy="8" r="2.6" fill="#40a040"/><circle cx="6" cy="15" r="2.6" fill="#40a040"/><circle cx="6" cy="22" r="2.6" fill="#40a040"/>
  <path d="M11,8 H19 M11,15 H19 M11,22 H19" stroke="#6a80b0" stroke-width="1.6"/>
</g>
<use href="#dd" x="1525" y="628" width="10" height="8"/>
<use href="#dots3" x="1563" y="615" width="10" height="30"/>

<!-- runs icons -->
<rect x="656" y="684" width="13" height="15" fill="#d83a3a"/><path d="M659.5,688 L665.5,695 M665.5,688 L659.5,695" stroke="#fff" stroke-width="1.5"/>
<rect x="874" y="684" width="13" height="15" fill="#2a4a8c"/><path d="M877.5,688 L883.5,695 M883.5,688 L877.5,695" stroke="#fff" stroke-width="1.5"/>

<!-- messages -->
<use href="#sortaz" x="1036" y="745" width="32" height="32"/>
<circle cx="1480" cy="759" r="12" fill="#d23c3c" stroke="#fff" stroke-width="2"/><path d="M1475,753 L1485,765 M1485,753 L1475,765" stroke="#fff" stroke-width="3"/>
<path d="M1524,746 L1536,770 H1512 Z" fill="#f8d880" stroke="#c08a30" stroke-width="2" stroke-linejoin="round"/><rect x="1523" y="753" width="2.4" height="9" fill="#222"/><rect x="1523" y="764" width="2.4" height="2.4" fill="#222"/>
<text x="1561" y="772" font-family="Liberation Serif" font-weight="bold" font-size="32" fill="#3a58b0">i</text>

<!-- status drag handle -->
<g fill="#b4b4b4"><rect x="886" y="965" width="3" height="3"/><rect x="886" y="972" width="3" height="3"/><rect x="886" y="979" width="3" height="3"/><rect x="886" y="986" width="3" height="3"/><rect x="886" y="993" width="3" height="3"/></g>
</svg>


<!-- window corners -->
<svg width="1600" height="1006" style="left:0;top:0">
  <path d="M0,996 Q0,1006 10,1006 H0 Z" fill="#cfcfcf"/>
  <path d="M0,996 Q0,1006 10,1006" fill="none" stroke="#b8b8b8" stroke-width="1"/>
  <path d="M1600,996 Q1600,1006 1590,1006 H1600 Z" fill="#cfcfcf"/>
  <path d="M1600,996 Q1600,1006 1590,1006" fill="none" stroke="#b8b8b8" stroke-width="1"/>
  <path d="M0,11 Q0,0 11,0 H0 Z" fill="#f2f2f2"/>
  <path d="M0.5,11 Q0.5,0.5 11,0.5" fill="none" stroke="#c4c4c4" stroke-width="1"/>
  <path d="M1600,11 Q1600,0 1589,0 H1600 Z" fill="#f2f2f2"/>
  <path d="M1599.5,11 Q1599.5,0.5 1589,0.5" fill="none" stroke="#c4c4c4" stroke-width="1"/>
</svg>
</body></html>
